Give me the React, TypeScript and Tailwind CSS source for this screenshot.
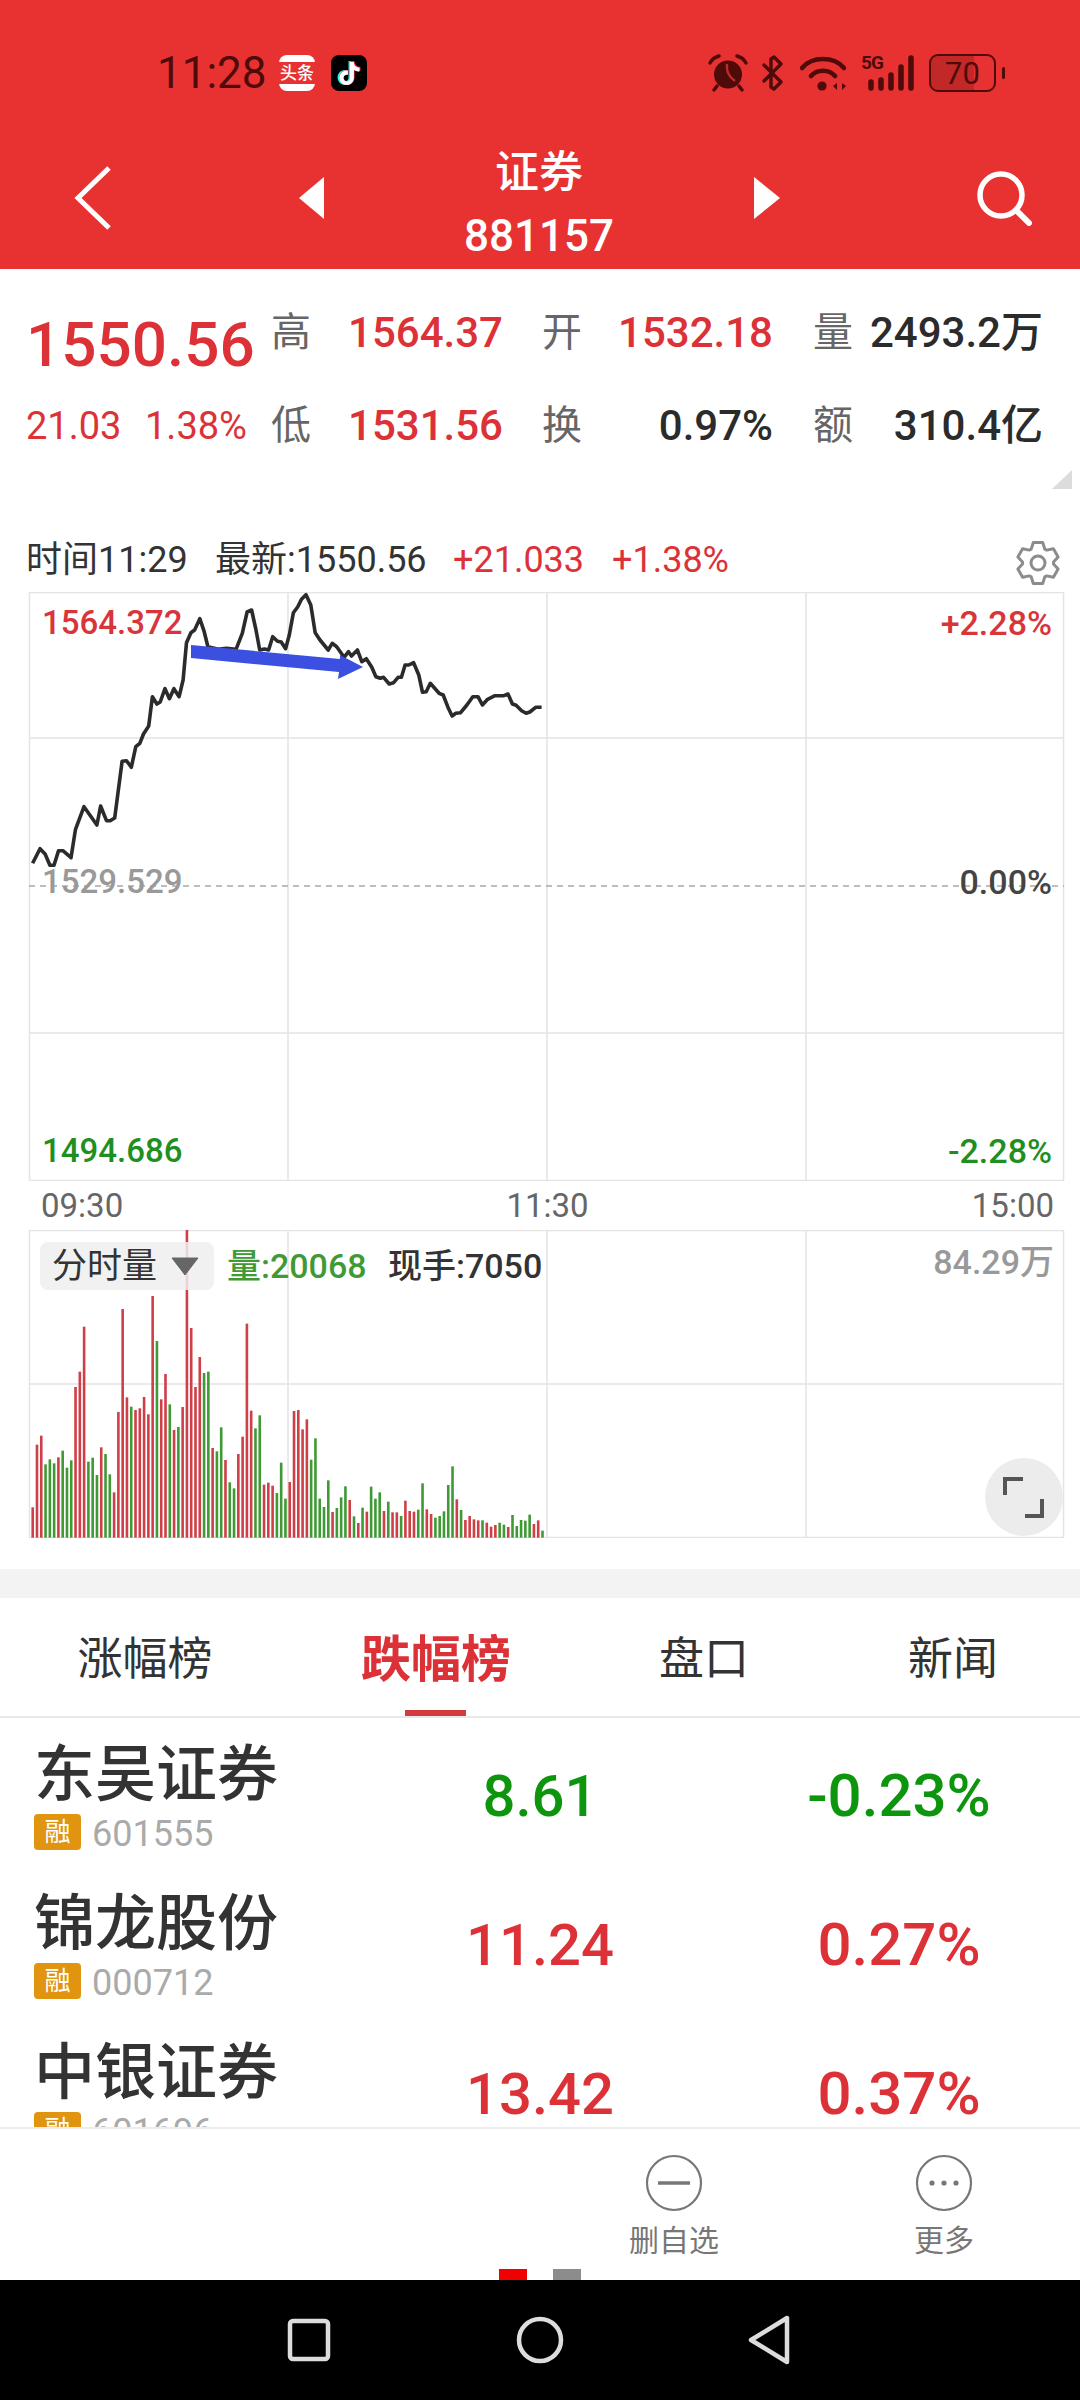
import { SiTiktok } from "react-icons/si";

const GRID = "#e4e4e4";

// traced from the chart, [x, y] in page pixels
const rawLine: [number, number][] = [
  [88, 850], [108, 806], [122, 822], [135, 856], [146, 856], [158, 812], [170, 812], [192, 833], [204, 748], [227, 680],
  [262, 735], [272, 678], [288, 722], [298, 722], [310, 714], [330, 544], [342, 542], [355, 562], [367, 500], [378, 490],
  [388, 462], [402, 438], [412, 350], [424, 372], [433, 366], [446, 326], [458, 356], [470, 326], [484, 350], [495, 300],
  [504, 188], [516, 158], [526, 150], [540, 116], [552, 155], [562, 200], [590, 208], [612, 205], [638, 208], [655, 160],
  [668, 96], [680, 90], [692, 150], [702, 210], [715, 207], [726, 210], [737, 170], [750, 184], [760, 186], [772, 206],
  [782, 165], [793, 98], [805, 80], [815, 58], [827, 44], [840, 75], [852, 158], [865, 180], [887, 210], [898, 190],
  [910, 200], [930, 232], [942, 215], [950, 228], [966, 210], [978, 245], [990, 236], [1005, 262], [1016, 290], [1028, 295],
  [1037, 292], [1052, 312], [1064, 308], [1076, 292], [1085, 292], [1095, 255], [1105, 255], [1118, 248], [1132, 285], [1142, 337],
  [1152, 335], [1163, 310], [1187, 340], [1198, 345], [1212, 385], [1222, 408], [1232, 400], [1245, 398], [1262, 375], [1278, 350],
  [1292, 350], [1304, 375], [1318, 358], [1338, 347], [1362, 347], [1373, 342], [1385, 372], [1395, 376], [1410, 392], [1422, 400],
  [1432, 396], [1448, 382], [1464, 382],
];
const linePoints = rawLine.map(([x, y]) => `${(x / 2.703).toFixed(1)},${(580 + y / 3).toFixed(1)}`).join(" ");

// bar tops, r = up minute, g = down minute
const bars: [number, "r" | "g"][] = [
  [892, "r"], [704, "r"], [677, "r"], [763, "g"], [748, "g"], [760, "g"], [742, "r"], [722, "g"], [773, "g"], [751, "g"],
  [531, "r"], [485, "r"], [350, "r"], [755, "g"], [743, "g"], [795, "g"], [712, "r"], [732, "g"], [793, "g"], [847, "r"],
  [606, "r"], [297, "r"], [562, "r"], [590, "g"], [600, "r"], [595, "r"], [561, "r"], [613, "r"], [258, "r"], [393, "g"],
  [568, "r"], [492, "r"], [583, "g"], [660, "r"], [651, "g"], [591, "r"], [60, "r"], [354, "r"], [531, "r"], [441, "r"],
  [489, "g"], [485, "g"], [714, "r"], [724, "g"], [652, "g"], [750, "r"], [817, "g"], [835, "g"], [732, "r"], [680, "r"],
  [341, "r"], [602, "r"], [655, "g"], [616, "g"], [824, "r"], [818, "r"], [827, "r"], [849, "g"], [758, "g"], [866, "g"],
  [816, "r"], [603, "r"], [600, "r"], [658, "r"], [628, "r"], [749, "g"], [685, "g"], [866, "g"], [891, "g"], [811, "g"],
  [906, "r"], [894, "g"], [862, "g"], [829, "g"], [870, "r"], [919, "g"], [939, "r"], [893, "g"], [905, "r"], [830, "g"],
  [866, "g"], [847, "g"], [903, "r"], [875, "g"], [907, "r"], [907, "r"], [918, "g"], [872, "r"], [903, "r"], [905, "r"],
  [899, "g"], [820, "g"], [898, "r"], [912, "r"], [923, "g"], [918, "g"], [904, "g"], [825, "g"], [769, "g"], [868, "r"],
  [900, "g"], [930, "r"], [918, "r"], [928, "r"], [931, "r"], [931, "g"], [938, "r"], [950, "r"], [945, "r"], [938, "g"],
  [944, "g"], [951, "r"], [915, "g"], [948, "g"], [930, "g"], [932, "g"], [914, "g"], [942, "r"], [931, "r"], [962, "g"],
];

const stocks = [
  { name: "东吴证券", code: "601555", price: "8.61", pct: "-0.23%", up: false },
  { name: "锦龙股份", code: "000712", price: "11.24", pct: "0.27%", up: true },
  { name: "中银证券", code: "601696", price: "13.42", pct: "0.37%", up: true },
];

// six tooth gear outline, centred on 23,23
const gearPath = (() => {
  const pt = (deg: number, r: number) => {
    const a = (deg * Math.PI) / 180;
    return `${(23 + r * Math.cos(a)).toFixed(1)} ${(23 + r * Math.sin(a)).toFixed(1)}`;
  };
  const parts: string[] = [];
  for (let i = 0; i < 6; i++) {
    const a = i * 60 - 90;
    parts.push(pt(a - 26, 15.5), pt(a - 13, 21), pt(a + 13, 21), pt(a + 26, 15.5));
  }
  return "M" + parts.join("L") + "Z";
})();

function StatusIcons() {
  const c = "#4f0a0a";
  return (
    <div className="flex items-center">
      <svg width="40" height="38" viewBox="0 0 40 38">
        <circle cx="20" cy="20.5" r="14" fill={c} />
        <path d="M19 10c-1 8 2 13 8 17" stroke="#c42a2a" strokeWidth="2.4" fill="none" />
        <path d="M2 9c2-4 5-6 9-7M38 9c-2-4-5-6-9-7M9 32l-3 4M31 32l3 4" stroke={c} strokeWidth="3.4" strokeLinecap="round" fill="none" />
      </svg>
      <svg className="ml-[13px]" width="23" height="38" viewBox="0 0 23 38">
        <path d="M3 11 20 28 13 35 10 33V5L13 3 20 10 3 27" stroke={c} strokeWidth="3.4" strokeLinejoin="round" strokeLinecap="round" fill="none" />
      </svg>
      <svg className="ml-[16px]" width="46" height="36" viewBox="0 0 46 36">
        <path d="M2 13C12 1 34 1 44 13M11 21c6-7 18-7 24 0" stroke={c} strokeWidth="4.6" strokeLinecap="round" fill="none" />
        <circle cx="22" cy="31" r="4.6" fill={c} />
        <path d="M33 31l4-3v7zM46 31l-4-3v7z" fill={c} />
      </svg>
      <div className="ml-[15px] relative w-[54px] h-[36px]">
        <span className="absolute left-0 top-[-1px] text-[19px] leading-[18px] font-bold tracking-[-1px] text-[#4f0a0a]">5G</span>
        <svg className="absolute inset-0" width="54" height="36" viewBox="0 0 54 36">
          <path d="M10 27v6M20 25v8M30 20v13M40 12v21M50 3v30" stroke={c} strokeWidth="5.5" strokeLinecap="round" fill="none" />
        </svg>
      </div>
      <div className="ml-[14px] flex items-center">
        <div className="relative w-[67px] h-[38px] rounded-[9px] border-[2.5px] border-[#4f0a0a] overflow-hidden flex items-center justify-center">
          <div className="absolute left-0 top-0 bottom-0 w-[68%] bg-[#4f0a0a]/25" />
          <span className="relative text-[31px] leading-none text-[#4f0a0a]">70</span>
        </div>
        <div className="ml-[6px] w-[3px] h-[12px] rounded-full bg-[#4f0a0a]" />
      </div>
    </div>
  );
}

function Header() {
  return (
    <div className="h-[269px] bg-[#e83232]">
      <div className="pt-[36px] h-[110px] pl-[157px] pr-[75px] flex items-center justify-between">
        <div className="flex items-center">
          <span className="w-[108px] text-[44px] leading-none text-[#4f0a0a]">11:28</span>
          <div className="ml-[14px] w-[36px] h-[36px] rounded-[8px] bg-white flex items-center justify-center">
            <div className="w-full h-[22px] bg-[#e83232] flex items-center justify-center text-[17px] leading-none font-medium text-white">头条</div>
          </div>
          <div className="ml-[16px] w-[36px] h-[36px] rounded-[8px] bg-black relative flex items-center justify-center">
            <SiTiktok className="absolute text-[24px] text-[#25f4ee] -translate-x-[1px]" />
            <SiTiktok className="absolute text-[24px] text-[#fe2c55] translate-x-[1px]" />
            <SiTiktok className="absolute text-[23px] text-white" />
          </div>
        </div>
        <StatusIcons />
      </div>
      <div className="mt-[40px] h-[110px] pl-[74px] flex items-center text-white">
        <svg className="shrink-0 mt-[-14px]" width="38" height="64" viewBox="0 0 38 64">
          <path d="M35 2 4 32l31 30" stroke="#fff" strokeWidth="5" fill="none" />
        </svg>
        <svg className="shrink-0 ml-[187px] mt-[-14px]" width="25" height="42" viewBox="0 0 25 42">
          <path d="M25 0 0 21l25 21z" fill="#fff" />
        </svg>
        <div className="w-[430px] shrink-0 mt-[-3px] flex flex-col items-center">
          <div className="text-[44px] leading-[56px] font-medium">证券</div>
          <div className="mt-[8px] text-[44px] leading-[54px] font-medium">881157</div>
        </div>
        <svg className="shrink-0 mt-[-14px]" width="26" height="42" viewBox="0 0 26 42">
          <path d="M0 0l26 21L0 42z" fill="#fff" />
        </svg>
        <svg className="shrink-0 ml-[196px] mt-[-14px]" width="56" height="56" viewBox="0 0 56 56">
          <circle cx="25" cy="25" r="21" stroke="#fff" strokeWidth="5.5" fill="none" />
          <path d="M40 40l13 13" stroke="#fff" strokeWidth="6" strokeLinecap="round" />
        </svg>
      </div>
    </div>
  );
}

function Pair({ label, value, red, w }: { label: string; value: string; red?: boolean; w: string }) {
  return (
    <div className={`flex items-center ${w}`}>
      <span className="w-[41px] text-[40px] leading-none text-[#666]">{label}</span>
      <span className={`flex-1 text-right text-[42px] leading-none font-medium ${red ? "text-[#dc3237]" : "text-[#2b2b2b]"}`}>{value}</span>
    </div>
  );
}

function Quote() {
  return (
    <div className="relative h-[270px] pt-[17px]">
      <div className="flex h-[93px] items-center">
        <div className="w-[271px] pl-[26px] pt-[24px] text-[62px] leading-none font-medium text-[#dc3237]">1550.56</div>
        <Pair label="高" value="1564.37" red w="w-[232px]" />
        <div className="w-[39px]" />
        <Pair label="开" value="1532.18" red w="w-[231px]" />
        <div className="w-[40px]" />
        <Pair label="量" value="2493.2万" w="w-[230px]" />
      </div>
      <div className="flex h-[93px] items-center">
        <div className="w-[271px] pl-[26px] flex text-[38px] leading-none text-[#dc3237]">
          <span className="w-[119px]">21.03</span>
          <span>1.38%</span>
        </div>
        <Pair label="低" value="1531.56" red w="w-[232px]" />
        <div className="w-[39px]" />
        <Pair label="换" value="0.97%" w="w-[231px]" />
        <div className="w-[40px]" />
        <Pair label="额" value="310.4亿" w="w-[230px]" />
      </div>
      <svg className="absolute right-[8px] top-[201px]" width="20" height="19" viewBox="0 0 20 19">
        <path d="M20 0v19H0z" fill="#dcdcdc" />
      </svg>
    </div>
  );
}

function InfoRow() {
  return (
    <div className="h-[53px] pl-[26px] pr-[19px] pb-[12px] flex items-center text-[36px] leading-none text-[#333]">
      <span className="w-[189px]">时间11:29</span>
      <span className="w-[238px]">最新:1550.56</span>
      <span className="w-[159px] text-[#dc3237]">+21.033</span>
      <span className="text-[#dc3237]">+1.38%</span>
      <svg className="ml-auto mt-[6px]" width="46" height="46" viewBox="0 0 46 46" fill="none" stroke="#8c8c8c" strokeWidth="3">
        <path d={gearPath} strokeLinejoin="round" />
        <circle cx="23" cy="23" r="7" />
      </svg>
    </div>
  );
}

function PriceChart() {
  return (
    <div className="relative h-[589px]">
      <svg className="absolute inset-0" width="1080" height="589" viewBox="0 592 1080 589">
        <rect x="29.5" y="592.5" width="1034" height="588" fill="none" stroke={GRID} strokeWidth="1.5" />
        <path d="M288 592v588M547 592v588M806 592v588M29 738h1035M29 1033h1035" stroke={GRID} strokeWidth="1.5" />
        <path d="M29 886h1035" stroke="#a8a8a8" strokeWidth="1.5" strokeDasharray="6 5" />
        <polyline points={linePoints} fill="none" stroke="#2b2b2b" strokeWidth="3.6" strokeLinejoin="round" />
        <path d="M191 645 340 659 340 655 363 667 338 679 339 672 191 658Z" fill="#3b4fe0" />
      </svg>
      <span className="absolute left-[42px] top-[11px] text-[33px] leading-[40px] font-medium text-[#d8343a]">1564.372</span>
      <span className="absolute right-[28px] top-[11px] text-[34px] leading-[40px] font-medium text-[#d8343a]">+2.28%</span>
      <span className="absolute left-[42px] top-[270px] text-[33px] leading-[40px] font-medium text-[#999]">1529.529</span>
      <span className="absolute right-[28px] top-[270px] text-[34px] leading-[40px] font-medium text-[#444]">0.00%</span>
      <span className="absolute left-[42px] top-[539px] text-[33px] leading-[40px] font-medium text-[#1f8f1f]">1494.686</span>
      <span className="absolute right-[28px] top-[539px] text-[34px] leading-[40px] font-medium text-[#1f8f1f]">-2.28%</span>
    </div>
  );
}

function TimeAxis() {
  return (
    <div className="h-[49px] pl-[41px] pr-[26px] flex items-center justify-between text-[33px] leading-none text-[#666]">
      <span className="w-[200px]">09:30</span>
      <span>11:30</span>
      <span className="w-[200px] text-right">15:00</span>
    </div>
  );
}

function VolumeChart() {
  return (
    <div className="relative h-[308px]">
      <svg className="absolute inset-0" width="1080" height="308" viewBox="0 1230 1080 308">
        <rect x="29.5" y="1230.5" width="1034" height="307" fill="none" stroke={GRID} strokeWidth="1.5" />
        <path d="M288 1230v308M547 1230v308M806 1230v308M29 1384h1035" stroke={GRID} strokeWidth="1.5" />
        {bars.map(([top, side], i) => {
          const y = 1210 + top / 3;
          return (
            <rect
              key={i}
              x={31.4 + i * 4.284}
              y={y}
              width="2.6"
              height={1537.7 - y}
              fill={side === "r" ? "#cf3f47" : "#3f9a35"}
            />
          );
        })}
      </svg>
      <div className="absolute left-[40px] top-[12px] w-[174px] h-[48px] rounded-[8px] bg-[#eeeeee]/85 flex items-center pl-[12px]">
        <span className="text-[35px] leading-none text-[#333]">分时量</span>
        <svg className="ml-[14px]" width="28" height="19" viewBox="0 0 28 19">
          <path d="M1 1h26L14 18z" fill="#666" stroke="#666" strokeLinejoin="round" />
        </svg>
      </div>
      <div className="absolute left-[227px] top-[12px] h-[48px] flex items-center text-[34px] leading-none font-medium">
        <span className="w-[161px] text-[#3f9a35]">量:20068</span>
        <span className="text-[#333]">现手:7050</span>
      </div>
      <span className="absolute right-[26px] top-[12px] text-[34px] leading-[40px] font-medium text-[#999]">84.29万</span>
      <div className="absolute right-[17px] bottom-[2px] w-[78px] h-[78px] rounded-full bg-[#ececec]">
        <svg width="78" height="78" viewBox="0 0 78 78">
          <path d="M20 37V21h18M57 41v17H40" stroke="#555" strokeWidth="4" fill="none" />
        </svg>
      </div>
    </div>
  );
}

function Tabs() {
  return (
    <div className="h-[120px] pt-[5px] border-b-[2px] border-[#e9e9e9] flex text-[45px] leading-none text-[#333]">
      <div className="w-[290px] flex items-center justify-center">涨幅榜</div>
      <div className="w-[292px] relative flex items-center justify-center text-[50px] font-bold text-[#dc3237]">
        跌幅榜
        <div className="absolute bottom-0 left-[115px] w-[61px] h-[6px] bg-[#d23a3f]" />
      </div>
      <div className="w-[244px] flex items-center justify-center">盘口</div>
      <div className="w-[254px] flex items-center justify-center">新闻</div>
    </div>
  );
}

function StockRow({ name, code, price, pct, up }: (typeof stocks)[number]) {
  const color = up ? "text-[#dc3237]" : "text-[#0d960d]";
  return (
    <div className="h-[149px] flex items-center shrink-0">
      <div className="w-[398px] pl-[34px] h-full pt-[26px]">
        <div className="text-[61px] leading-[62px] font-medium text-[#333]">{name}</div>
        <div className="mt-[5px] flex items-center">
          <div className="w-[47px] h-[36px] rounded-[4px] bg-[#e0940f] flex items-center justify-center text-[26px] leading-none text-white">融</div>
          <span className="ml-[11px] pt-[5px] text-[36px] leading-none text-[#aaa]">{code}</span>
        </div>
      </div>
      <div className={`w-[284px] pt-[6px] text-center text-[58px] leading-none font-medium ${color}`}>{price}</div>
      <div className={`ml-[37px] w-[360px] pt-[6px] text-center text-[60px] leading-none font-medium ${color}`}>{pct}</div>
    </div>
  );
}

function Toolbar() {
  return (
    <div className="h-[153px] border-t-[2px] border-[#ececec] flex flex-col bg-white">
      <div className="flex-1 flex justify-end pr-[1px] pt-[25px] text-[30px] leading-none text-[#777]">
        <div className="w-[270px] flex flex-col items-center">
          <svg width="58" height="58" viewBox="0 0 58 58">
            <circle cx="29" cy="29" r="27" stroke="#777" strokeWidth="2.2" fill="none" />
            <path d="M13 29h32" stroke="#777" strokeWidth="3.5" />
          </svg>
          <span className="mt-[14px]">删自选</span>
        </div>
        <div className="w-[270px] flex flex-col items-center">
          <svg width="58" height="58" viewBox="0 0 58 58">
            <circle cx="29" cy="29" r="27" stroke="#777" strokeWidth="2.2" fill="none" />
            <circle cx="17" cy="29" r="2.6" fill="#777" />
            <circle cx="29" cy="29" r="2.6" fill="#777" />
            <circle cx="41" cy="29" r="2.6" fill="#777" />
          </svg>
          <span className="mt-[14px]">更多</span>
        </div>
      </div>
      <div className="h-[11px] flex justify-center gap-[26px]">
        <div className="w-[28px] bg-[#f00000]" />
        <div className="w-[28px] bg-[#8c8c8c]" />
      </div>
    </div>
  );
}

function NavBar() {
  return (
    <div className="h-[120px] bg-black flex items-center justify-center">
      <svg width="560" height="50" viewBox="0 0 560 50" fill="none" stroke="#dcdcdc" strokeWidth="4.5" strokeLinejoin="round">
        <rect x="30" y="6" width="38" height="38" rx="3" />
        <circle cx="280" cy="25" r="21" />
        <path d="M527 3v44L491 25z" />
      </svg>
    </div>
  );
}

export default function App() {
  return (
    <div className="w-[1080px] h-[2400px] overflow-hidden bg-white font-['Roboto','Noto_Sans_CJK_SC',sans-serif]">
      <Header />
      <Quote />
      <InfoRow />
      <PriceChart />
      <TimeAxis />
      <VolumeChart />
      <div className="h-[31px]" />
      <div className="h-[29px] bg-[#f3f3f3]" />
      <Tabs />
      <div className="h-[409px] overflow-hidden flex flex-col">
        {stocks.map((s) => (
          <StockRow key={s.code} {...s} />
        ))}
      </div>
      <Toolbar />
      <NavBar />
    </div>
  );
}
